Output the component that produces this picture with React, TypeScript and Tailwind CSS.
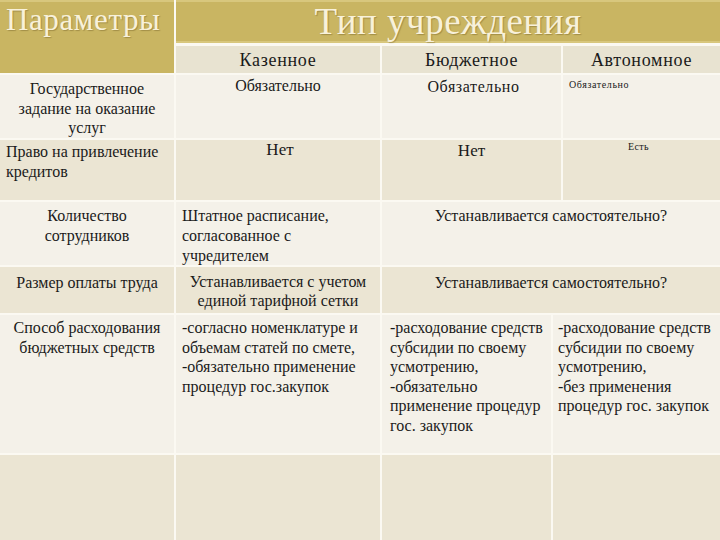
import React from 'react';

const light = 'bg-[#f4f1e9]';
const dark = 'bg-[#ebe5d3]';

export default function App() {
  return (
    <div className="w-[720px] h-[540px] overflow-hidden bg-[#fbf9f2] flex flex-col gap-[2px] font-['Liberation_Serif','Times_New_Roman',serif] text-[16px] leading-[19.5px] text-[#1a1a1a]">
      {/* header */}
      <div className="flex gap-[2px] h-[73px] shrink-0">
        <div className="w-[174px] bg-[#c9b562] border-t-2 border-[#d8c77d] pl-[6px] pt-[1px] text-[31px] leading-[34px] tracking-[0.6px] text-[#f8f1da] [text-shadow:1px_1px_1px_rgba(90,70,20,0.35)]">
          Параметры
        </div>
        <div className="flex-1 flex flex-col gap-[3px]">
          <div className="h-[43px] bg-[#c9b562] border-t-2 border-b-2 border-[#d8c77d] flex items-center justify-center text-[37px] leading-[40px] tracking-[0.5px] text-[#f8f1da] [text-shadow:1px_1px_1px_rgba(90,70,20,0.35)]">
            Тип учреждения
          </div>
          <div className="flex-1 flex gap-[2px] text-[18px] tracking-[0.7px]">
            <div className="w-[204px] bg-[#e8e3d1] flex items-center justify-center pt-[3px]">Казенное</div>
            <div className="w-[179px] bg-[#e8e3d1] flex items-center justify-center pt-[3px]">Бюджетное</div>
            <div className="flex-1 bg-[#e8e3d1] flex items-center justify-center pt-[3px]">Автономное</div>
          </div>
        </div>
      </div>

      {/* Государственное задание */}
      <div className="flex gap-[2px] h-[63px] shrink-0">
        <div className={`w-[174px] ${light} text-center pt-[4px]`}>
          Государственное
          <br />
          задание на оказание
          <br />
          услуг
        </div>
        <div className={`w-[204px] ${light} text-center pt-[1px]`}>Обязательно</div>
        <div className={`w-[179px] ${light} text-center pt-[2px] pl-[4px] tracking-[0.6px]`}>Обязательно</div>
        <div className={`flex-1 ${light} pl-[6px] pt-[4px] text-[10px] leading-[12px] tracking-[0.6px]`}>Обязательно</div>
      </div>

      {/* Право на привлечение кредитов */}
      <div className="flex gap-[2px] h-[60px] shrink-0">
        <div className={`w-[174px] ${dark} pl-[6px] pt-[2px]`}>
          Право на привлечение
          <br />
          кредитов
        </div>
        <div className={`w-[204px] ${dark} text-center pt-0 pl-[4px] text-[17px]`}>Нет</div>
        <div className={`w-[179px] ${dark} text-center pt-[1px] text-[17px]`}>Нет</div>
        <div className={`flex-1 ${dark} pl-[65px] pt-[1px] text-[10px] leading-[12px] tracking-[0.4px]`}>Есть</div>
      </div>

      {/* Количество сотрудников */}
      <div className="flex gap-[2px] h-[63px] shrink-0">
        <div className={`w-[174px] ${light} text-center pt-[4px] leading-[20px]`}>
          Количество
          <br />
          сотрудников
        </div>
        <div className={`w-[204px] ${light} pl-[6px] pt-[4px] leading-[20px]`}>
          Штатное расписание,
          <br />
          согласованное с
          <br />
          учредителем
        </div>
        <div className={`flex-1 ${light} text-center pt-[4px]`}>Устанавливается самостоятельно?</div>
      </div>

      {/* Размер оплаты труда */}
      <div className="flex gap-[2px] h-[46px] shrink-0">
        <div className={`w-[174px] ${dark} text-center pt-[6px]`}>Размер оплаты труда</div>
        <div className={`w-[204px] ${dark} text-center pt-[6px] leading-[18.5px]`}>
          Устанавливается с учетом
          <br />
          единой тарифной сетки
        </div>
        <div className={`flex-1 ${dark} text-center pt-[6px]`}>Устанавливается самостоятельно?</div>
      </div>

      {/* Способ расходования */}
      <div className="flex gap-[2px] h-[138px] shrink-0">
        <div className={`w-[174px] ${light} text-center pt-[3px]`}>
          Способ расходования
          <br />
          бюджетных средств
        </div>
        <div className={`w-[204px] ${light} pl-[6px] pt-[3px]`}>
          -согласно номенклатуре и
          <br />
          объемам статей по смете,
          <br />
          -обязательно применение
          <br />
          процедур гос.закупок
        </div>
        <div className={`w-[169px] ${light} pl-[8px] pt-[3px]`}>
          -расходование средств
          <br />
          субсидии по своему
          <br />
          усмотрению,
          <br />
          -обязательно
          <br />
          применение процедур
          <br />
          гос. закупок
        </div>
        <div className={`flex-1 ${light} pl-[5px] pt-[3px]`}>
          -расходование средств
          <br />
          субсидии по своему
          <br />
          усмотрению,
          <br />
          -без применения
          <br />
          процедур гос. закупок
        </div>
      </div>

      {/* empty row */}
      <div className="flex gap-[2px] flex-1">
        <div className={`w-[174px] ${dark}`} />
        <div className={`w-[204px] ${dark}`} />
        <div className={`w-[169px] ${dark}`} />
        <div className={`flex-1 ${dark}`} />
      </div>
    </div>
  );
}
